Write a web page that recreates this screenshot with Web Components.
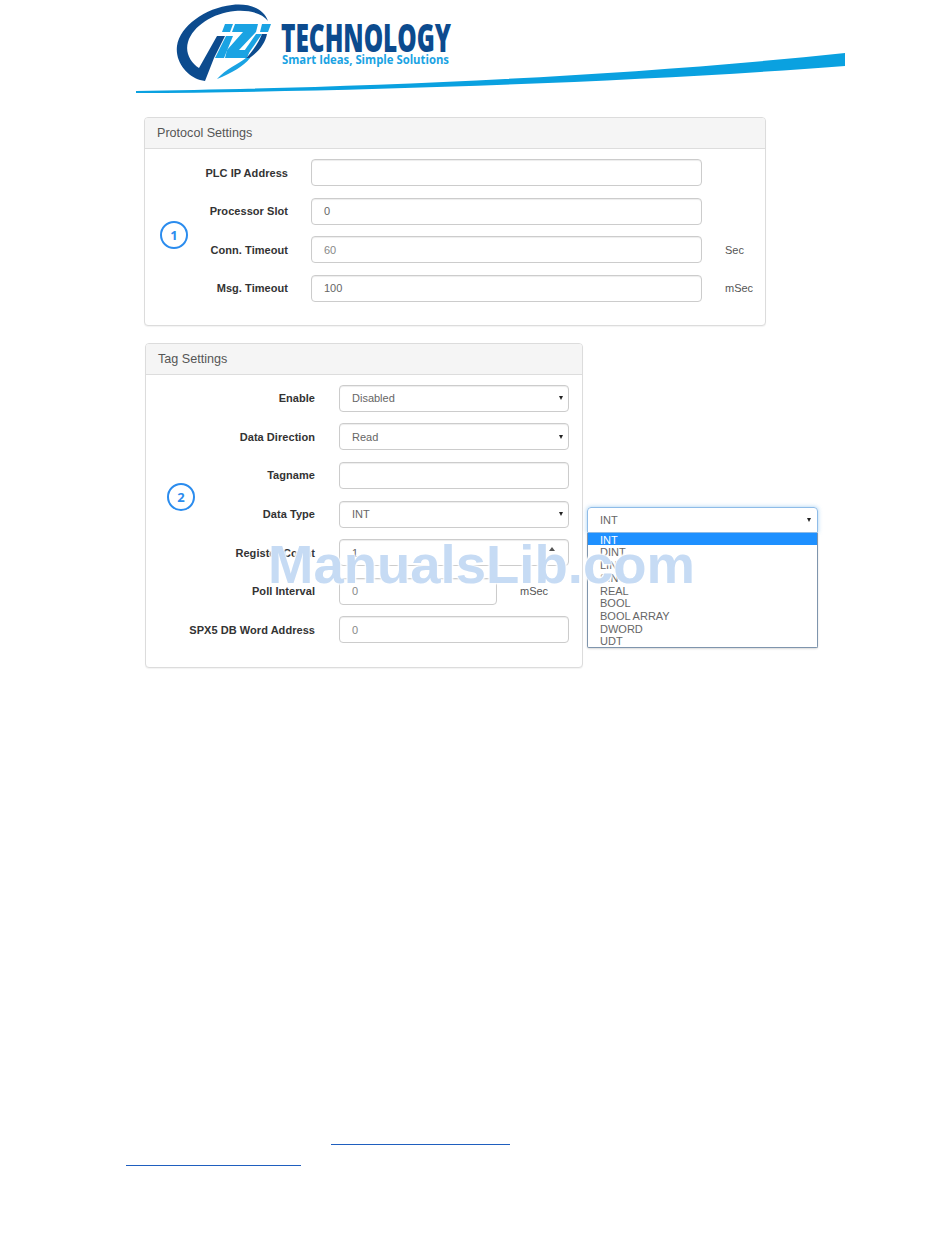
<!DOCTYPE html>
<html lang="en">
<head>
<meta charset="utf-8">
<title>Protocol and Tag Settings</title>
<style>
  html, body { margin: 0; background: #fff; }
  body { font-family: "Liberation Sans", Arial, sans-serif; }
</style>
</head>
<body>
<manual-page>
  <brand-banner slot="banner"></brand-banner>

  <settings-card heading="Protocol Settings" style="--card-left:144px;--card-width:622px;--body-bottom:23px;--marker-pad:15px;--label-w:100px;--field-w:391px;--field-gap:23px;--row-gap:11.6px;--marker-top:62px">
    <step-marker slot="marker" number="1"></step-marker>
    <form-row label="PLC IP Address"><text-field></text-field></form-row>
    <form-row label="Processor Slot"><text-field value="0"></text-field></form-row>
    <form-row label="Conn. Timeout" unit="Sec"><text-field value="60" muted></text-field></form-row>
    <form-row label="Msg. Timeout" unit="mSec"><text-field value="100"></text-field></form-row>
  </settings-card>

  <div slot="tags" class="tags">
    <settings-card heading="Tag Settings" style="--card-left:145px;--card-width:438px;--body-bottom:24px;--marker-pad:21px;--label-w:120px;--field-w:230px;--field-gap:24px;--row-gap:11.6px;--marker-top:98px">
      <step-marker slot="marker" number="2"></step-marker>
      <form-row label="Enable"><text-field value="Disabled" select></text-field></form-row>
      <form-row label="Data Direction"><text-field value="Read" select></text-field></form-row>
      <form-row label="Tagname"><text-field></text-field></form-row>
      <form-row label="Data Type"><text-field value="INT" select></text-field></form-row>
      <form-row label="Register Count"><text-field value="1" spinner></text-field></form-row>
      <form-row label="Poll Interval" unit="mSec" style="--field-w:158px"><text-field value="0" muted></text-field></form-row>
      <form-row label="SPX5 DB Word Address"><text-field value="0" muted></text-field></form-row>
    </settings-card>
    <type-listbox value="INT" options="INT,DINT,LINT,SINT,REAL,BOOL,BOOL ARRAY,DWORD,UDT"></type-listbox>
  </div>

  <link-rule slot="links" style="--rule-left:331px;--rule-width:179px;--rule-top:476px"></link-rule>
  <link-rule slot="links" style="--rule-left:126px;--rule-width:175px;--rule-top:20px"></link-rule>

  <span slot="stamp">ManualsLib.com</span>
</manual-page>

<script>
class ManualPage extends HTMLElement {
  constructor() {
    super();
    this.attachShadow({ mode: "open" });
    this.shadowRoot.innerHTML = `
      <style>
        :host { display: block; position: relative; width: 950px; height: 1237px; overflow: hidden; background: #fff; }
        .stamp {
          position: absolute; left: 268px; top: 532px;
          font: bold 54.5px/66px "Liberation Sans", Arial, sans-serif;
          color: #c6dbf4;
          white-space: nowrap;
          text-shadow: 0 0 2px #fff, 0 0 3px #fff, 1px 1px 2px #fff, -1px -1px 2px #fff;
        }
        ::slotted(.tags) { display: flex; align-items: flex-start; margin-top: 17px; }
      </style>
      <slot name="banner"></slot>
      <slot></slot>
      <slot name="tags"></slot>
      <slot name="links"></slot>
      <div class="stamp"><slot name="stamp"></slot></div>
    `;
  }
}

class BrandBanner extends HTMLElement {
  constructor() {
    super();
    this.attachShadow({ mode: "open" });
    this.shadowRoot.innerHTML = `
      <style>
        :host { display: block; height: 117px; }
        svg { display: block; }
        .name { font: 800 39px "Open Sans", sans-serif; fill: #0c4b8e; }
        .tag { font: 700 12.5px "Open Sans", sans-serif; fill: #1aa3e3; }
      </style>
      <svg width="950" height="117" viewBox="0 0 950 117">
        <path fill="#0aa1e0" d="M136 91C330 88 600 79 845 53V66C640 82 350 92 136 93Z"/>
        <!-- swoosh and V -->
        <path fill="#0c4b8e" d="M268 21C264 8 248 3 232 5C205 8 180 26 177 46C175 62 187 76 200 80L205 81L214 58L225 36H217L199 68C190 62 185 52 188 42C193 26 213 13 235 11C250 10 262 13 268 21Z"/>
        <!-- i Z i -->
        <path fill="#1aa3e3" d="M225 24H233L230 32H222Z"/>
        <path fill="#1aa3e3" d="M226 36H233L224 58H215Z"/>
        <path fill="#1aa3e3" d="M235 24H258L256 32L239 50H250L247 58H225L227 50L243 32H232Z"/>
        <path fill="#1aa3e3" d="M262 24H271L268 32H260Z"/>
        <path fill="#1aa3e3" d="M256 34H262L246 57H240Z"/>
        <path fill="#0c4b8e" d="M262 34H267C265 45 256 55 243 62C252 52 258 44 262 34Z"/>
        <path fill="#1aa3e3" d="M217 79C226 69 238 64 246 58L250 58C244 66 232 73 217 79Z"/>
        <text class="name" x="281" y="52" textLength="170" lengthAdjust="spacingAndGlyphs">TECHNOLOGY</text>
        <text class="tag" x="282" y="64" textLength="167" lengthAdjust="spacingAndGlyphs">Smart Ideas, Simple Solutions</text>
      </svg>
    `;
  }
}

class SettingsCard extends HTMLElement {
  constructor() {
    super();
    this.attachShadow({ mode: "open" });
    this.shadowRoot.innerHTML = `
      <style>
        :host {
          display: block; box-sizing: border-box;
          margin-left: var(--card-left);
          width: var(--card-width);
          background: #fff;
          border: 1px solid #dcdcdc;
          border-radius: 4px;
          box-shadow: 0 1px 1px rgba(0, 0, 0, 0.05);
          flex: none;
        }
        header {
          box-sizing: border-box; height: 31px;
          padding: 0 12px;
          display: flex; align-items: center;
          background: #f5f5f5;
          border-bottom: 1px solid #ddd;
          border-radius: 3px 3px 0 0;
          font-size: 12.6px; color: #555;
        }
        .body { display: flex; align-items: flex-start; padding: 10px 0 var(--body-bottom) var(--marker-pad); }
        .rows { display: flex; flex-direction: column; gap: var(--row-gap); }
        .marker { margin-top: var(--marker-top); flex: none; }
      </style>
      <header></header>
      <div class="body">
        <div class="marker"><slot name="marker"></slot></div>
        <div class="rows"><slot></slot></div>
      </div>
    `;
    this.shadowRoot.querySelector("header").textContent = this.getAttribute("heading");
  }
}

class StepMarker extends HTMLElement {
  constructor() {
    super();
    this.attachShadow({ mode: "open" });
    this.shadowRoot.innerHTML = `
      <style>
        :host {
          display: flex; box-sizing: border-box; width: 28px; height: 28px;
          align-items: center; justify-content: center;
          border: 2px solid #2b8cee; border-radius: 50%;
          font: bold 13px "Open Sans", sans-serif; color: #2b8cee;
        }
      </style>
      <span></span>
    `;
    this.shadowRoot.querySelector("span").textContent = this.getAttribute("number");
  }
}

class FormRow extends HTMLElement {
  constructor() {
    super();
    this.attachShadow({ mode: "open" });
    this.shadowRoot.innerHTML = `
      <style>
        :host { display: flex; align-items: center; height: 27px; font-size: 11px; }
        .label {
          width: var(--label-w); flex: none;
          display: flex; justify-content: flex-end;
          white-space: nowrap; font-weight: bold; color: #333;
          letter-spacing: 0.05px;
        }
        .field { width: var(--field-w); flex: none; margin-left: var(--field-gap); }
        .unit { margin-left: 23px; color: #555; white-space: nowrap; }
      </style>
      <div class="label"></div>
      <div class="field"><slot></slot></div>
    `;
    this.shadowRoot.querySelector(".label").textContent = this.getAttribute("label");
    const unit = this.getAttribute("unit");
    if (unit) {
      const el = document.createElement("div");
      el.className = "unit";
      el.textContent = unit;
      this.shadowRoot.appendChild(el);
    }
  }
}

class TextField extends HTMLElement {
  constructor() {
    super();
    this.attachShadow({ mode: "open" });
    this.shadowRoot.innerHTML = `
      <style>
        :host {
          display: flex; box-sizing: border-box; height: 27px;
          align-items: center; justify-content: space-between;
          padding: 0 5px 0 12px;
          background: #fff;
          border: 1px solid #ccc; border-radius: 4px;
          box-shadow: inset 0 1px 1px rgba(0, 0, 0, 0.075);
          font-size: 11px; color: #666;
        }
        :host([muted]) { color: #888; }
        .arrow { width: 0; height: 0; border-left: 2.5px solid transparent; border-right: 2.5px solid transparent; border-top: 4px solid #222; }
        .spin { width: 0; height: 0; margin: -8px 8px 0 0; border-left: 3px solid transparent; border-right: 3px solid transparent; border-bottom: 4px solid #555; }
      </style>
      <span></span>
    `;
    this.shadowRoot.querySelector("span").textContent = this.getAttribute("value") || "";
    if (this.hasAttribute("select") || this.hasAttribute("spinner")) {
      const mark = document.createElement("i");
      mark.className = this.hasAttribute("select") ? "arrow" : "spin";
      this.shadowRoot.appendChild(mark);
    }
  }
}

class TypeListbox extends HTMLElement {
  constructor() {
    super();
    this.attachShadow({ mode: "open" });
    this.shadowRoot.innerHTML = `
      <style>
        :host { display: block; flex: none; width: 231px; margin: 164px 0 0 4px; font-size: 11px; color: #666; }
        .closed {
          box-sizing: border-box; height: 26px;
          display: flex; align-items: center; justify-content: space-between;
          padding: 0 6px 0 12px;
          border: 1px solid #8fbce8; border-radius: 4px 4px 0 0;
          box-shadow: 0 0 4px rgba(102, 175, 233, 0.6);
        }
        .arrow { width: 0; height: 0; border-left: 2.5px solid transparent; border-right: 2.5px solid transparent; border-top: 4px solid #222; }
        ul { list-style: none; margin: 0; padding: 0; background: #fff; border: 1px solid #7f95ad; border-top: 0; box-shadow: 0 1px 2px rgba(0, 0, 0, 0.15); border-radius: 0 0 2px 2px; }
        li { height: 12.7px; line-height: 14px; padding-left: 12px; }
        li.on { background: #1e90ff; color: #fff; }
      </style>
      <div class="closed"><span></span><i class="arrow"></i></div>
      <ul></ul>
    `;
    const value = this.getAttribute("value");
    this.shadowRoot.querySelector("span").textContent = value;
    const list = this.shadowRoot.querySelector("ul");
    this.getAttribute("options").split(",").forEach((name) => {
      const li = document.createElement("li");
      li.textContent = name;
      if (name === value) li.classList.add("on");
      list.appendChild(li);
    });
  }
}

class LinkRule extends HTMLElement {
  constructor() {
    super();
    this.attachShadow({ mode: "open" });
    this.shadowRoot.innerHTML = `
      <style>
        :host {
          display: block; height: 1px;
          margin: var(--rule-top) 0 0 var(--rule-left);
          width: var(--rule-width);
          background: #1f5fbf;
        }
      </style>
    `;
  }
}

customElements.define("manual-page", ManualPage);
customElements.define("brand-banner", BrandBanner);
customElements.define("settings-card", SettingsCard);
customElements.define("step-marker", StepMarker);
customElements.define("form-row", FormRow);
customElements.define("text-field", TextField);
customElements.define("type-listbox", TypeListbox);
customElements.define("link-rule", LinkRule);
</script>
</body>
</html>
